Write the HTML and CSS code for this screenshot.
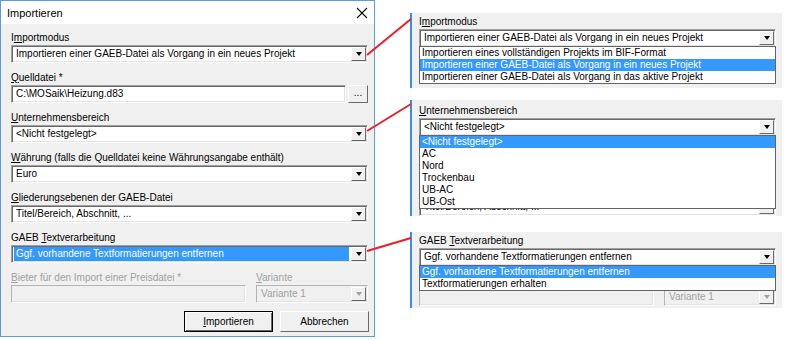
FILE: index.html
```html
<!DOCTYPE html>
<html lang="de">
<head>
    <meta charset="UTF-8">
    <title>Importieren</title>
    <link rel="stylesheet" href="styles.css">
</head>
<body>
<div class="page">

    <!-- Dialog -->
    <div class="dialog">
        <div class="titlebar">
            <span>Importieren</span>
            <svg class="close" width="12" height="12" viewBox="0 0 12 12"><path d="M1 1L11 11M11 1L1 11" stroke="#000" stroke-width="1.1" fill="none"/></svg>
        </div>
        <div class="client">
            <div class="field">
                <div class="label">I<u>m</u>portmodus</div>
                <div class="combo"><span class="value">Importieren einer GAEB-Datei als Vorgang in ein neues Projekt</span><span class="btn"></span></div>
            </div>
            <div class="field">
                <div class="label"><u>Q</u>uelldatei *</div>
                <div class="row">
                    <div class="combo grow"><span class="value">C:\MOSaik\Heizung.d83</span></div>
                    <div class="browse">...</div>
                </div>
            </div>
            <div class="field">
                <div class="label"><u>U</u>nternehmensbereich</div>
                <div class="combo"><span class="value">&lt;Nicht festgelegt&gt;</span><span class="btn"></span></div>
            </div>
            <div class="field">
                <div class="label"><u>W</u>ährung (falls die Quelldatei keine Währungsangabe enthält)</div>
                <div class="combo"><span class="value">Euro</span><span class="btn"></span></div>
            </div>
            <div class="field">
                <div class="label"><u>G</u>liederungsebenen der GAEB-Datei</div>
                <div class="combo"><span class="value">Titel/Bereich, Abschnitt, ...</span><span class="btn"></span></div>
            </div>
            <div class="field">
                <div class="label">GAEB <u>T</u>extverarbeitung</div>
                <div class="combo"><span class="value"><span class="sel">Ggf. vorhandene Textformatierungen entfernen</span></span><span class="btn"></span></div>
            </div>
            <div class="field row wide">
                <div class="bieter">
                    <div class="label disabled"><u>B</u>ieter für den Import einer Preisdatei *</div>
                    <div class="combo off"><span class="value"></span></div>
                </div>
                <div class="variante">
                    <div class="label disabled"><u>V</u>ariante</div>
                    <div class="combo off"><span class="value">Variante 1</span><span class="btn"></span></div>
                </div>
            </div>
            <div class="buttons">
                <div class="button default"><u>I</u>mportieren</div>
                <div class="button">Abbrechen</div>
            </div>
        </div>
    </div>

    <!-- Ausschnitte mit geöffneten Listen -->
    <div class="zooms">
        <div class="panel p1">
            <div class="field">
                <div class="label">I<u>m</u>portmodus</div>
                <div class="combo">
                    <span class="value">Importieren einer GAEB-Datei als Vorgang in ein neues Projekt</span><span class="btn"></span>
                    <ul class="list">
                        <li>Importieren eines vollständigen Projekts im BIF-Format</li>
                        <li class="hl">Importieren einer GAEB-Datei als Vorgang in ein neues Projekt</li>
                        <li>Importieren einer GAEB-Datei als Vorgang in das aktive Projekt</li>
                    </ul>
                </div>
            </div>
        </div>

        <div class="panel p2">
            <div class="field">
                <div class="label"><u>U</u>nternehmensbereich</div>
                <div class="combo">
                    <span class="value">&lt;Nicht festgelegt&gt;</span><span class="btn"></span>
                    <ul class="list">
                        <li class="hl">&lt;Nicht festgelegt&gt;</li>
                        <li>AC</li>
                        <li>Nord</li>
                        <li>Trockenbau</li>
                        <li>UB-AC</li>
                        <li>UB-Ost</li>
                    </ul>
                </div>
            </div>
            <div class="covered"></div>
            <div class="combo peek"><span class="value">Titel/Bereich, Abschnitt, ...</span><span class="btn"></span></div>
        </div>

        <div class="panel p3">
            <div class="field">
                <div class="label">GAEB <u>T</u>extverarbeitung</div>
                <div class="combo">
                    <span class="value">Ggf. vorhandene Textformatierungen entfernen</span><span class="btn"></span>
                    <ul class="list">
                        <li class="hl">Ggf. vorhandene Textformatierungen entfernen</li>
                        <li>Textformatierungen erhalten</li>
                    </ul>
                </div>
            </div>
            <div class="field row wide">
                <div class="bieter">
                    <div class="label"></div>
                    <div class="combo off"><span class="value"></span></div>
                </div>
                <div class="variante">
                    <div class="label"></div>
                    <div class="combo off"><span class="value">Variante 1</span><span class="btn"></span></div>
                </div>
            </div>
        </div>
    </div>

    <!-- Verbindungslinien und Mauszeiger -->
    <svg class="overlay" width="800" height="340" viewBox="0 0 800 340">
        <g stroke="#e8202a" stroke-width="2">
            <line x1="367" y1="55" x2="411" y2="19"/>
            <line x1="367" y1="131" x2="411" y2="104"/>
            <line x1="367" y1="251" x2="411" y2="238"/>
        </g>
        <g fill="#fff" stroke="#000" stroke-width="1" stroke-linejoin="round">
            <path d="M728.5 63.5v15l3.5-3.5 2.5 6 2.5-1-2.5-6h5z"/>
            <path d="M513.5 142.5v15l3.5-3.5 2.5 6 2.5-1-2.5-6h5z"/>
            <path d="M636.5 271.5v15l3.5-3.5 2.5 6 2.5-1-2.5-6h5z"/>
        </g>
    </svg>
</div>
</body>
</html>
```

FILE: styles.css
```css
body {
    margin: 0;
    font-family: 'Liberation Sans', Arial, sans-serif;
    font-size: 10px;
    color: #000;
    background-color: #fff;
}

.page {
    position: relative;
    display: flex;
    width: 800px;
    height: 340px;
    overflow: hidden;
}

/* Dialog */

.dialog {
    width: 373px;
    height: 335px;
    border: 1px solid #5a9ae0;
    display: flex;
    flex-direction: column;
    background-color: #f0f0f0;
}

.titlebar {
    height: 23px;
    background-color: #fff;
    display: flex;
    align-items: center;
    justify-content: space-between;
    padding: 0 6px 0 6px;
    font-size: 11px;
}

.client {
    flex: 1;
    padding: 7px 6px 0 10px;
}

.field {
    margin-bottom: 8px;
}

.label {
    height: 14px;
    line-height: 13px;
    white-space: nowrap;
}

.label.disabled {
    color: #a0a0a0;
}

.combo {
    position: relative;
    height: 18px;
    box-sizing: border-box;
    display: flex;
    background-color: #fff;
    border: 1px solid;
    border-color: #a0a0a0 #fff #fff #a0a0a0;
    box-shadow: inset 1px 1px 0 #696969, inset -1px -1px 0 #e3e3e3;
}

.combo .value {
    flex: 1;
    padding: 1px 0 0 4px;
    line-height: 14px;
    overflow: hidden;
    white-space: nowrap;
}

.combo .sel {
    display: block;
    margin: 0 2px 0 -2px;
    padding-left: 2px;
    background-color: #3399ff;
    color: #fff;
}

.combo .btn {
    width: 15px;
    margin: 1px 1px 1px 0;
    box-sizing: border-box;
    background-color: #f0f0f0;
    border: 1px solid;
    border-color: #fff #696969 #696969 #fff;
    display: flex;
    align-items: center;
    justify-content: center;
}

.combo .btn::after {
    content: "";
    border-left: 3px solid transparent;
    border-right: 3px solid transparent;
    border-top: 4px solid #000;
}

.combo.off {
    background-color: #f0f0f0;
    color: #a0a0a0;
    box-shadow: inset -1px -1px 0 #e3e3e3;
    border-color: #b4b4b4 #fff #fff #b4b4b4;
}

.combo.off .btn::after {
    border-top-color: #a0a0a0;
}

.row {
    display: flex;
    gap: 2px;
}

.row.wide {
    gap: 10px;
}

.grow {
    flex: 1;
}

.browse {
    width: 20px;
    height: 18px;
    box-sizing: border-box;
    border: 1px solid;
    border-color: #fff #696969 #696969 #fff;
    background-color: #f0f0f0;
    text-align: center;
    line-height: 14px;
}

.bieter {
    width: 235px;
}

.variante {
    flex: 1;
}

.buttons {
    display: flex;
    justify-content: flex-end;
    gap: 7px;
    margin-right: -1px;
}

.button {
    width: 89px;
    height: 21px;
    box-sizing: border-box;
    border: 1px solid;
    border-color: #fff #696969 #696969 #fff;
    background-color: #f0f0f0;
    text-align: center;
    line-height: 19px;
}

.button.default {
    border: 1px solid #000;
    box-shadow: inset 1px 1px 0 #fff, inset -1px -1px 0 #696969;
}

/* Ausschnitte */

.zooms {
    margin-left: 35px;
    width: 372px;
}

.panel {
    box-sizing: border-box;
    background-color: #f0f0f0;
    border-left: 2px solid #3b8ee0;
    padding: 2px 6px 0 7px;
    overflow: hidden;
}

.p1 {
    margin-top: 13px;
    height: 75px;
}

.p2 {
    margin-top: 12px;
    height: 116px;
    padding-top: 4px;
}

.p3 {
    margin-top: 16px;
    height: 76px;
}

.covered {
    height: 54px;
}

.list {
    position: absolute;
    top: 100%;
    left: -1px;
    right: -1px;
    margin: 0;
    padding: 0;
    list-style: none;
    background-color: #fff;
    border: 1px solid #646464;
    z-index: 2;
}

.list li {
    height: 12px;
    line-height: 12px;
    padding-left: 2px;
    white-space: nowrap;
}

.list li.hl {
    background-color: #3399ff;
    color: #fff;
}

.overlay {
    position: absolute;
    left: 0;
    top: 0;
    pointer-events: none;
}
```
